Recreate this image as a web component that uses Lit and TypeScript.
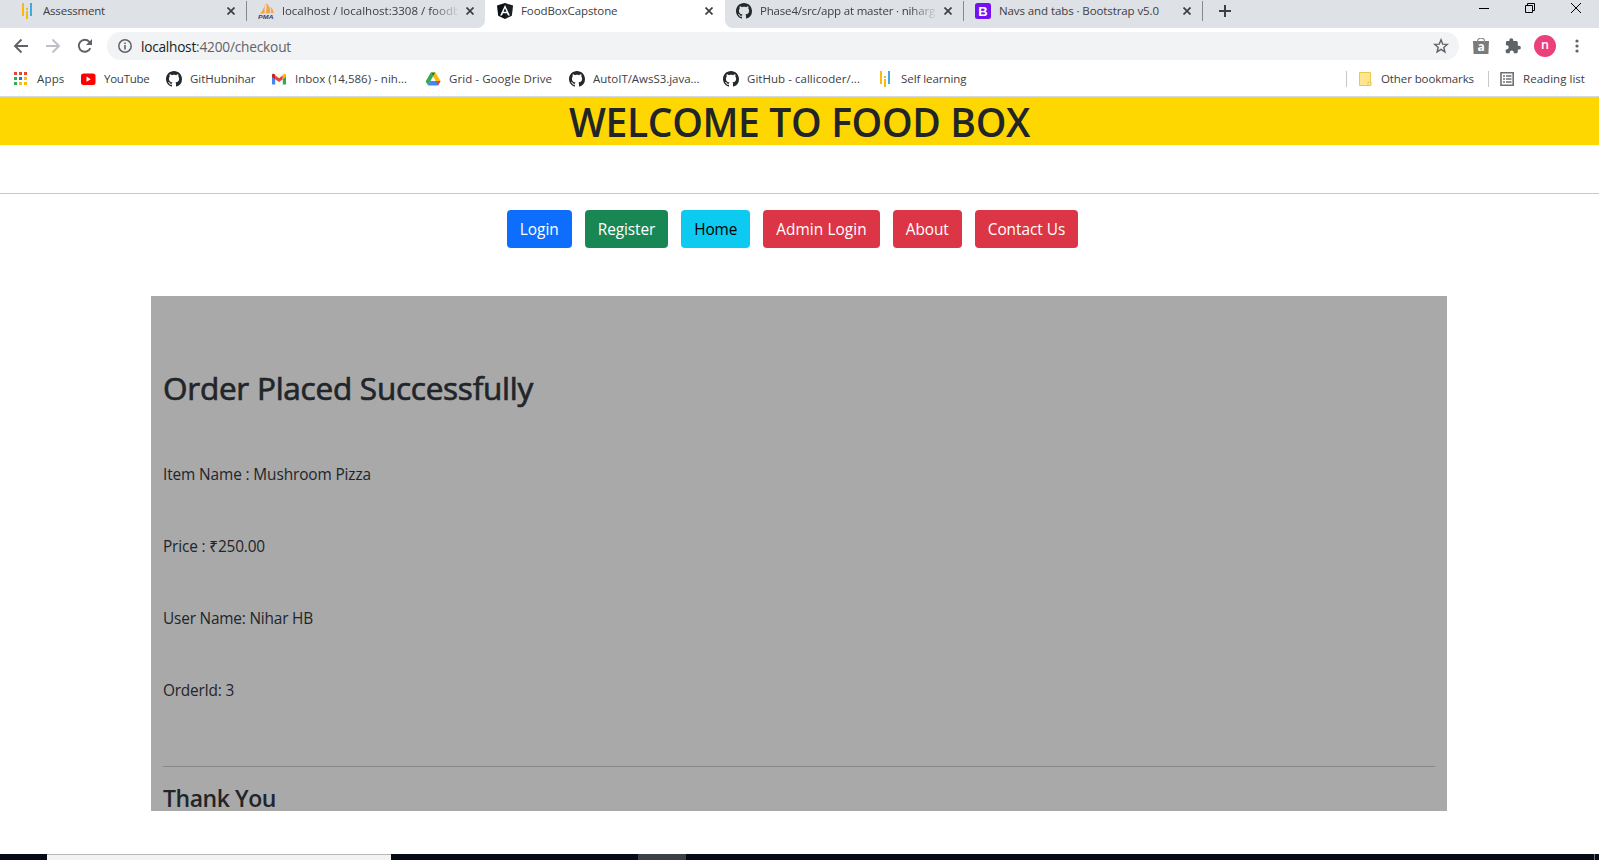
import { LitElement, html, svg, css, TemplateResult } from "lit";
import { customElement, property, query } from "lit/decorators.js";

/** A single line of text, tracked so that it fills the given advance width. */
@customElement("fit-text")
class FitText extends LitElement {
  @property() text = "";
  @property({ type: Number }) width = 0;
  @query(".t") private span!: HTMLSpanElement;

  static styles = css`
    :host { display: inline-block; white-space: pre; flex: none; text-align: left; }
    .t { display: inline-block; }
  `;

  render() {
    return html`<span class="t">${this.text}</span>`;
  }

  updated() {
    this.span.style.letterSpacing = "0px";
    const natural = this.span.getBoundingClientRect().width;
    const step = (this.width - natural) / this.text.length;
    this.span.style.letterSpacing = `${step.toFixed(3)}px`;
  }
}

const github = svg`<path fill="#24292e" fill-rule="evenodd" d="M8 0C3.58 0 0 3.58 0 8c0 3.54 2.29 6.53 5.47 7.59.4.07.55-.17.55-.38 0-.19-.01-.82-.01-1.49-2.01.37-2.53-.49-2.69-.94-.09-.23-.48-.94-.82-1.13-.28-.15-.68-.52-.01-.53.63-.01 1.08.58 1.23.82.72 1.21 1.87.87 2.33.66.07-.52.28-.87.51-1.07-1.78-.2-3.64-.89-3.64-3.95 0-.87.31-1.59.82-2.15-.08-.2-.36-1.02.08-2.12 0 0 .67-.21 2.2.82.64-.18 1.32-.27 2-.27s1.36.09 2 .27c1.53-1.04 2.2-.82 2.2-.82.44 1.1.16 1.92.08 2.12.51.56.82 1.27.82 2.15 0 3.07-1.87 3.75-3.65 3.95.29.25.54.73.54 1.48 0 1.07-.01 1.93-.01 2.2 0 .21.15.46.55.38A8.01 8.01 0 0 0 16 8c0-4.42-3.58-8-8-8z"/>`;
const bars = svg`<path fill="#fbb90d" d="M3 0h2v13H3zM7 5h2v2H7zM7 8h2v8H7z"/><path fill="#3fa9e0" d="M11 0h2v13h-2z"/>`;
const pma = svg`<path fill="#f8a13f" d="M6.600 1v9.500H1.800C4.600 8.500 6 5 6.600 1zM8.200 0c3.200 2.500 4.200 6 4 10.200L7.600 10.500C8.700 7 8.800 3.500 8.200 0zM12.200 3.500c2.300 2 3.300 4.300 3.500 6.500l-2.600.3c.2-2.300 0-4.500-.9-6.800z"/><text x="0" y="15.500" font-size="5.800" font-weight="700" font-style="italic" textLength="15.500" lengthAdjust="spacingAndGlyphs" font-family="Liberation Sans, sans-serif" fill="#3c3f73">PMA</text>`;
const angular = svg`<path fill="#0b1015" d="M8 0l8 2.600-1.200 10.100L8 16l-6.800-3.300L0 2.600z"/><path fill="#3a3f45" d="M8 0l8 2.600-1.200 10.100L8 16z" opacity=".35"/><path fill="#fff" fill-rule="evenodd" d="M8 2l4.900 10.600H11L10 10.300H6l-1 2.300H3.100zM8 5.300L6.500 8.800h3z"/>`;
const bootstrap = svg`<rect width="16" height="16" rx="2.500" fill="#7411f2"/><text x="8" y="12.600" text-anchor="middle" font-size="13" font-weight="700" font-family="Liberation Sans, sans-serif" fill="#fff">B</text>`;
const apps = svg`${[0, 1, 2].map((r) => [0, 1, 2].map((c) => svg`<rect x=${2 + c * 5} y=${1 + r * 5} width="3" height="3" fill=${[["#ea4335", "#ea4335", "#ea4335"], ["#34a853", "#1a73e8", "#fbbc04"], ["#34a853", "#fbbc04", "#fbbc04"]][r][c]}/>`))}`;
const youtube = svg`<rect x="1" y="2.500" width="14.500" height="11.500" rx="2.500" fill="#f00"/><path fill="#fff" d="M6.500 5.500v5.300l4.300-2.650z"/>`;
const gmail = svg`<path fill="#4285f4" d="M1 4v9.500h3.200V6.800z"/><path fill="#34a853" d="M11.800 6.800v6.700H15V4z"/><path fill="#ea4335" d="M4.200 4.300L8 7.200l3.800-2.900v3.900L8 11.100 4.200 8.200z"/><path fill="#c5221f" d="M1 4.300C1 2.600 2.700 2.500 3.500 3.200l.7.600v4.400L1 5.800z"/><path fill="#fbbc04" d="M15 4.300c0-1.700-1.700-1.800-2.500-1.100l-.7.600v4.400L15 5.800z"/>`;
const drive = svg`<path fill="#fbbc04" d="M5.800 1.500h4.700L15.500 10h-4.800z"/><path fill="#188038" d="M5.800 1.500h4.400L8.100 5.300z"/><path fill="#34a853" d="M5.800 1.500l2.300 3.800-5 8.900L.6 10.400z"/><path fill="#4285f4" d="M5.300 10h10.200l-2.400 4.500H2.900z"/><path fill="#ea4335" d="M10.700 10h4.800l-2.100 4z"/>`;

const icon = (body: unknown, cls = "") =>
  html`<svg class="ico ${cls}" viewBox="0 0 16 16" width="16" height="16">${body}</svg>`;

interface Tab { icon: unknown; text: string; width: number; active?: boolean; cut?: boolean; sep?: boolean; }
const TABS: Tab[] = [
  { icon: bars, text: "Assessment", width: 62, sep: true },
  { icon: pma, text: "localhost / localhost:3308 / foodb", width: 178, cut: true },
  { icon: angular, text: "FoodBoxCapstone", width: 96.5, active: true },
  { icon: github, text: "Phase4/src/app at master · niharg", width: 175, cut: true, sep: true },
  { icon: bootstrap, text: "Navs and tabs · Bootstrap v5.0", width: 160, sep: true },
];

const MARKS: { icon: unknown; text: string; width: number; }[] = [
  { icon: apps, text: "Apps", width: 27.5 },
  { icon: youtube, text: "YouTube", width: 45.5 },
  { icon: github, text: "GitHubnihar", width: 65.5 },
  { icon: gmail, text: "Inbox (14,586) - nih...", width: 112 },
  { icon: drive, text: "Grid - Google Drive", width: 103 },
  { icon: github, text: "AutoIT/AwsS3.java...", width: 106.5 },
  { icon: github, text: "GitHub - callicoder/...", width: 113 },
  { icon: bars, text: "Self learning", width: 65.5 },
];

@customElement("browser-chrome")
class BrowserChrome extends LitElement {
  static styles = css`
    :host { display: block; font: 11.500px/16px "Open Sans", "Noto Sans", sans-serif; color: #3c4043; }
    .ico { flex: none; display: block; }
    .strip { display: flex; height: 28px; background: #dee1e6; padding-left: 7px; overflow: hidden; }
    .tab { position: relative; box-sizing: border-box; width: 239px; flex: none; display: flex; gap: 8px; padding: 3px 11px 0 12px; }
    .label { flex: 1; min-width: 0; overflow: hidden; height: 18px; }
    .cut { -webkit-mask-image: linear-gradient(90deg, #000 150px, transparent 178px); mask-image: linear-gradient(90deg, #000 150px, transparent 178px); }
    .x { flex: none; margin-top: 4px; }
    .sep::after { content: ""; position: absolute; right: -1px; top: 1px; width: 1px; height: 20px; background: #85888c; }
    .active { background: #fff; box-shadow: 1px 0 #fff; }
    .active::before, .active::after { content: ""; position: absolute; bottom: 0; width: 8px; height: 8px; }
    .active::before { left: -8px; background: radial-gradient(circle at 0 0, transparent 7.5px, #fff 8.5px); }
    .active::after { right: -9px; background: radial-gradient(circle at 100% 0, transparent 7.5px, #fff 8.5px); }
    .plus { margin: 5px 0 0 17px; flex: none; }
    .win { margin: 3px 18px 0 auto; display: flex; gap: 36px; }
    .bar { display: flex; align-items: center; height: 28px; padding: 4px 0; background: #fff; }
    .nav { display: flex; gap: 16px; width: 94px; padding-left: 13px; box-sizing: content-box; flex: none; }
    .omni { flex: none; box-sizing: border-box; width: 1352px; height: 28px; border-radius: 14px; background: #f1f3f4; display: flex; align-items: center; padding: 0 10px; font-size: 13.7px; color: #202124; }
    .omni .ico { margin-right: 8px; }
    .omni fit-text { padding-top: 1px; }
    .path { color: #5f6368; }
    .omni .star { margin: 0 0 0 auto; }
    .right { display: flex; align-items: center; margin-left: 14px; }
    .avatar { width: 22px; height: 22px; border-radius: 50%; background: #ec407a; color: #fff; font-size: 12.5px; font-weight: 600; line-height: 20px; text-align: center; margin: 0 13px 0 13px; }
    .marks { display: flex; align-items: center; height: 32px; box-sizing: border-box; padding: 0 14px 4px 12px; background: #fff; }
    .marks { padding-bottom: 3px; }
    .list { display: grid; grid-template-columns: 68px 86px 105px 154px 144px 154px 154px 100px; }
    .mark { display: flex; gap: 8px; }
    .mark:first-child { gap: 9px; }
    .other { display: flex; align-items: center; margin-left: auto; }
    .v { width: 1px; height: 16px; background: #c6c8cb; }
    .folder { margin: 0 8px 0 10px; }
    .reading { margin: 0 8px 0 10px; }
    .gap { width: 14px; }
    .edge { height: 1px; background: #d5d8dd; }
  `;

  private tab(t: Tab): TemplateResult {
    return html`<div class="tab ${t.active ? "active" : ""} ${t.sep ? "sep" : ""}">
      ${icon(t.icon)}
      <div class="label ${t.cut ? "cut" : ""}"><fit-text .text=${t.text} .width=${t.width}></fit-text></div>
      <svg class="x" width="8" height="8" viewBox="0 0 8 8"><path d="M.5.5l7 7M7.5.5l-7 7" stroke="#3c4043" stroke-width="1.7"/></svg>
    </div>`;
  }

  render() {
    return html`
      <div class="strip">
        ${TABS.map((t) => this.tab(t))}
        <svg class="plus" width="12" height="12" viewBox="0 0 12 12"><path d="M6 0v12M0 6h12" stroke="#3c4043" stroke-width="2"/></svg>
        <div class="win">
          <svg width="10" height="10"><path d="M0 5.5h10" stroke="#000"/></svg>
          <svg width="10" height="10" fill="none" stroke="#000"><path d="M.5 2.5h7v7h-7zM2.500 2.500v-2h7v7h-2"/></svg>
          <svg width="10" height="10"><path d="M0 0l10 10M10 0L0 10" stroke="#000"/></svg>
        </div>
      </div>
      <div class="bar">
        <div class="nav">
          ${icon(svg`<path d="M15 8H2.500M8.500 1.500L2 8l6.500 6.500" fill="none" stroke="#5f6368" stroke-width="1.900"/>`)}
          ${icon(svg`<path d="M1 8h12.500M7.500 1.500L14 8l-6.500 6.500" fill="none" stroke="#bdc0c4" stroke-width="1.900"/>`)}
          ${icon(svg`<path d="M13.300 10.200A6 6 0 1 1 12.300 3.800L14 5.500" fill="none" stroke="#5f6368" stroke-width="1.900"/><path d="M15 1v6H9z" fill="#5f6368"/>`)}
        </div>
        <div class="omni">
          ${icon(svg`<circle cx="8" cy="8" r="6.200" fill="none" stroke="#5f6368" stroke-width="1.500"/><path d="M7.200 7h1.600v4.500H7.200zM7.200 4.500h1.600v1.600H7.200z" fill="#5f6368"/>`)}
          <fit-text .text=${"localhost"} .width=${55}></fit-text><fit-text class="path" .text=${":4200/checkout"} .width=${95}></fit-text>
          ${icon(svg`<path d="M8 1.800l1.700 4.300 4.600.3-3.500 3 1.100 4.500L8 11.400l-3.900 2.500 1.100-4.500-3.500-3 4.600-.3z" fill="none" stroke="#5f6368" stroke-width="1.400"/>`, "star")}
        </div>
        <div class="right">
          ${icon(svg`<path d="M0 3h16l-.6 13H.6z" fill="#7b7b7b"/><path d="M4.500 4.500V3a3 2.500 0 0 1 7 0v1.500" fill="none" stroke="#8d8d8d" stroke-width="1.200"/><text x="8" y="13" text-anchor="middle" font-size="12" font-weight="700" font-family="Open Sans, sans-serif" fill="#fff">a</text>`)}
          <svg class="ico" width="32" height="16" viewBox="0 0 32 16"><path fill="#5f6368" d="M30 7.800h-1.200V4.600c0-.9-.7-1.600-1.600-1.600h-2.900V2.200a2 2 0 0 0-4 0V3h-1.900c-.9 0-1.500.7-1.500 1.600v2.600h.7a2 2 0 0 1 0 4.200h-.9v2.400c0 .9.700 1.500 1.600 1.500h2.400v-.8a2 2 0 0 1 4.100 0v.8h2.400c.9 0 1.600-.6 1.600-1.500v-2.300H30a1.850 1.850 0 0 0 0-3.700z"/></svg>
          <div class="avatar">n</div>
          <svg width="16" height="16" viewBox="0 0 16 16" fill="#5f6368"><circle cx="8" cy="3" r="1.600"/><circle cx="8" cy="8" r="1.600"/><circle cx="8" cy="13" r="1.600"/></svg>
        </div>
      </div>
      <div class="marks">
        <div class="list">
          ${MARKS.map((m) => html`<div class="mark">${icon(m.icon)}<fit-text .text=${m.text} .width=${m.width}></fit-text></div>`)}
        </div>
        <div class="other">
          <div class="v"></div>
          ${icon(svg`<path d="M2.500 1.500h11v13h-11z" fill="#ffe58f" stroke="#e9c84c"/><path d="M11 14.500V11h3v3.500z" fill="#ffe58f" stroke="#e9c84c"/>`, "folder")}
          <fit-text .text=${"Other bookmarks"} .width=${93}></fit-text>
          <div class="gap"></div>
          <div class="v"></div>
          ${icon(svg`<path d="M2 1.800h12.200v12.400H2z" fill="#fff" stroke="#6e7174" stroke-width="1.600"/><path d="M4 5h2M4 8h2M4 11h2M7 5h5.500M7 8h5.500M7 11h5.500" stroke="#6e7174" stroke-width="1.300"/>`, "reading")}
          <fit-text .text=${"Reading list"} .width=${62}></fit-text>
        </div>
      </div>
      <div class="edge"></div>`;
  }
}

const LINKS = [
  { text: "Login", width: 39, tone: "primary" },
  { text: "Register", width: 57.5, tone: "success" },
  { text: "Home", width: 43, tone: "info" },
  { text: "Admin Login", width: 90.5, tone: "danger" },
  { text: "About", width: 43, tone: "danger" },
  { text: "Contact Us", width: 77.5, tone: "danger" },
];

const DETAILS = [
  { text: "Item Name : Mushroom Pizza", width: 208 },
  { text: "Price : ₹250.00", width: 102 },
  { text: "User Name: Nihar HB", width: 150 },
  { text: "OrderId: 3", width: 71 },
];

@customElement("order-page")
class OrderPage extends LitElement {
  static styles = css`
    :host { display: block; font: 15.4px/24px "Open Sans", "Noto Sans", sans-serif; color: #212529; background: #fff; }
    h1, h2, h3, p, hr { margin: 0; }
    h1 { height: 47px; padding-top: 1px; background: #ffd700; text-align: center; font-size: 39px; line-height: 47px; font-weight: 600; }
    hr { border: 0; height: 1px; }
    .rule { margin-top: 48px; background: #c8c9ca; }
    nav { display: flex; justify-content: center; gap: 13px; margin: 16px 14px 48px 0; }
    .btn { box-sizing: border-box; height: 38px; padding: 8px 13px 6px; border-radius: 4px; color: #fff; }
    .primary { background: #0d6efd; }
    .success { background: #198754; }
    .info { background: #0dcaf0; color: #000; }
    .danger { background: #dc3545; }
    .card { box-sizing: border-box; width: 1296px; height: 515px; margin-left: 151px; padding: 73px 12px 0; background: #a9a9a9; overflow: hidden; }
    h2 { font-size: 31.5px; line-height: 38px; margin-bottom: 56px; font-weight: 400; -webkit-text-stroke: 0.7px currentColor; }
    .details { display: grid; gap: 48px; }
    .details p { height: 24px; }
    .card hr { margin: 63px 0 17px; background: #878889; }
    h3 { font-size: 23px; line-height: 28px; font-weight: 600; }
  `;

  render() {
    return html`
      <h1><fit-text .text=${"WELCOME TO FOOD BOX"} .width=${461}></fit-text></h1>
      <hr class="rule" />
      <nav>${LINKS.map((l) => html`<div class="btn ${l.tone}"><fit-text .text=${l.text} .width=${l.width}></fit-text></div>`)}</nav>
      <section class="card">
        <h2><fit-text .text=${"Order Placed Successfully"} .width=${370}></fit-text></h2>
        <div class="details">
          ${DETAILS.map((d) => html`<p><fit-text .text=${d.text} .width=${d.width}></fit-text></p>`)}
        </div>
        <hr />
        <h3><fit-text .text=${"Thank You"} .width=${113}></fit-text></h3>
      </section>`;
  }
}

@customElement("app-root")
class AppRoot extends LitElement {
  static styles = css`
    :host { display: flex; flex-direction: column; height: 860px; background: #fff; overflow: hidden; }
    .page { flex: 1; }
    .taskbar { display: flex; height: 6px; background: #050a14; padding-left: 47px; }
    .search { width: 344px; box-sizing: border-box; background: #f2f2f2; border-top: 1px solid #b8b8b8; }
    .running { width: 48px; margin-left: 247px; background: #3c3f47; }
    .peek { width: 1px; margin: 0 4px 0 auto; background: #6d7178; }
  `;

  render() {
    return html`
      <browser-chrome></browser-chrome>
      <order-page class="page"></order-page>
      <div class="taskbar"><div class="search"></div><div class="running"></div><div class="peek"></div></div>`;
  }
}
